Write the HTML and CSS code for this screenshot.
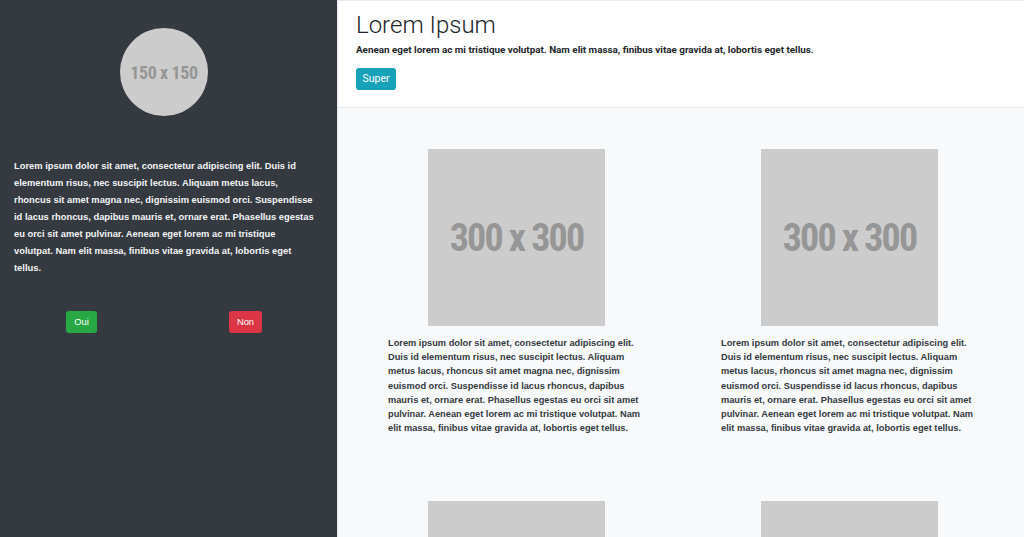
FILE: index.html
```html
<!DOCTYPE html>
<html lang="fr">
<head>
<meta charset="utf-8">
<title>Lorem Ipsum</title>
<link rel="stylesheet" href="styles.css">
</head>
<body>
<div class="layout">
  <aside class="sidebar">
    <div class="avatar"><span>150 x 150</span></div>
    <p class="side-text">Lorem ipsum dolor sit amet, consectetur adipiscing elit. Duis id elementum risus, nec suscipit lectus. Aliquam metus lacus, rhoncus sit amet magna nec, dignissim euismod orci. Suspendisse id lacus rhoncus, dapibus mauris et, ornare erat. Phasellus egestas eu orci sit amet pulvinar. Aenean eget lorem ac mi tristique volutpat. Nam elit massa, finibus vitae gravida at, lobortis eget tellus.</p>
    <div class="choices">
      <button class="btn btn-green">Oui</button>
      <button class="btn btn-red">Non</button>
    </div>
  </aside>
  <main class="main">
    <header class="hero">
      <h1 class="title">Lorem Ipsum</h1>
      <p class="lead">Aenean eget lorem ac mi tristique volutpat. Nam elit massa, finibus vitae gravida at, lobortis eget tellus.</p>
      <button class="btn btn-teal">Super</button>
    </header>
    <section class="cards">
      <article class="card">
        <div class="thumb"><span>300 x 300</span></div>
        <p class="card-text">Lorem ipsum dolor sit amet, consectetur adipiscing elit. Duis id elementum risus, nec suscipit lectus. Aliquam metus lacus, rhoncus sit amet magna nec, dignissim euismod orci. Suspendisse id lacus rhoncus, dapibus mauris et, ornare erat. Phasellus egestas eu orci sit amet pulvinar. Aenean eget lorem ac mi tristique volutpat. Nam elit massa, finibus vitae gravida at, lobortis eget tellus.</p>
      </article>
      <article class="card">
        <div class="thumb"><span>300 x 300</span></div>
        <p class="card-text">Lorem ipsum dolor sit amet, consectetur adipiscing elit. Duis id elementum risus, nec suscipit lectus. Aliquam metus lacus, rhoncus sit amet magna nec, dignissim euismod orci. Suspendisse id lacus rhoncus, dapibus mauris et, ornare erat. Phasellus egestas eu orci sit amet pulvinar. Aenean eget lorem ac mi tristique volutpat. Nam elit massa, finibus vitae gravida at, lobortis eget tellus.</p>
      </article>
      <article class="card">
        <div class="thumb"></div>
      </article>
      <article class="card">
        <div class="thumb"></div>
      </article>
    </section>
  </main>
</div>
</body>
</html>
```

FILE: styles.css
```css
* { box-sizing: border-box; }
html, body { margin: 0; padding: 0; height: 100%; overflow: hidden; }
body {
  font-family: "Liberation Sans", Arial, sans-serif;
  background: #f8f9fa;
}
.layout {
  display: flex;
  height: 537px;
}
.sidebar {
  width: 338px;
  flex: none;
  background: #343a40;
  border-right: 1px solid #e3e6ea;
  padding: 28px 14px 0 14px;
  display: flex;
  flex-direction: column;
}
.avatar {
  width: 88px;
  height: 88px;
  border-radius: 50%;
  background: #cccccc;
  align-self: flex-start;
  margin-left: 106px;
  display: flex;
  align-items: center;
  justify-content: center;
}
.avatar span {
  font-family: Roboto, sans-serif;
  font-stretch: 75%;
  font-weight: bold;
  font-size: 18px;
  letter-spacing: -0.4px;
  color: #969696;
  white-space: nowrap;
}
.side-text {
  margin: 42px 0 0 0;
  color: #f3f4f5;
  font-weight: bold;
  font-size: 9.35px;
  line-height: 17px;
  width: 302px;
}
.choices {
  display: flex;
  margin-top: 34px;
  padding-left: 52px;
  gap: 132px;
}
.btn {
  border: 0;
  border-radius: 3px;
  height: 22px;
  padding: 0;
  color: #ffffff;
  font-family: "Liberation Sans", Arial, sans-serif;
  font-size: 9.35px;
  line-height: 22px;
  cursor: pointer;
}
.btn-green { background: #28a745; width: 31px; }
.btn-red { background: #dc3545; width: 33px; }
.btn-teal {
  background: #17a2b8;
  width: 40px;
  font-family: Roboto, sans-serif;
  font-size: 10.5px;
}
.main {
  flex: 1;
  min-width: 0;
  display: flex;
  flex-direction: column;
}
.hero {
  background: #ffffff;
  border-top: 1px solid #e9ecef;
  border-bottom: 1px solid #e9ecef;
  padding: 9px 18px 18px 18px;
  height: 108px;
}
.title {
  margin: 0;
  font-family: Roboto, sans-serif;
  font-weight: 300;
  font-size: 24px;
  line-height: 30px;
  color: #212529;
}
.lead {
  margin: 3px 0 11px 0;
  font-family: Roboto, sans-serif;
  font-weight: 700;
  font-size: 9.85px;
  line-height: 14px;
  color: #212529;
}
.cards {
  display: grid;
  grid-template-columns: 333px 333px;
  padding: 41px 0 0 12px;
  row-gap: 66px;
}
.card {
  display: flex;
  flex-direction: column;
  align-items: center;
}
.thumb {
  width: 177px;
  height: 177px;
  background: #cccccc;
  display: flex;
  align-items: center;
  justify-content: center;
}
.thumb span {
  font-family: Roboto, sans-serif;
  font-stretch: 75%;
  font-weight: bold;
  font-size: 38px;
  letter-spacing: -1.8px;
  color: #969696;
  white-space: nowrap;
}
.card-text {
  margin: 10px 0 0 0;
  width: 257px;
  color: #343a40;
  font-weight: bold;
  font-size: 9.25px;
  line-height: 14.2px;
}
```
